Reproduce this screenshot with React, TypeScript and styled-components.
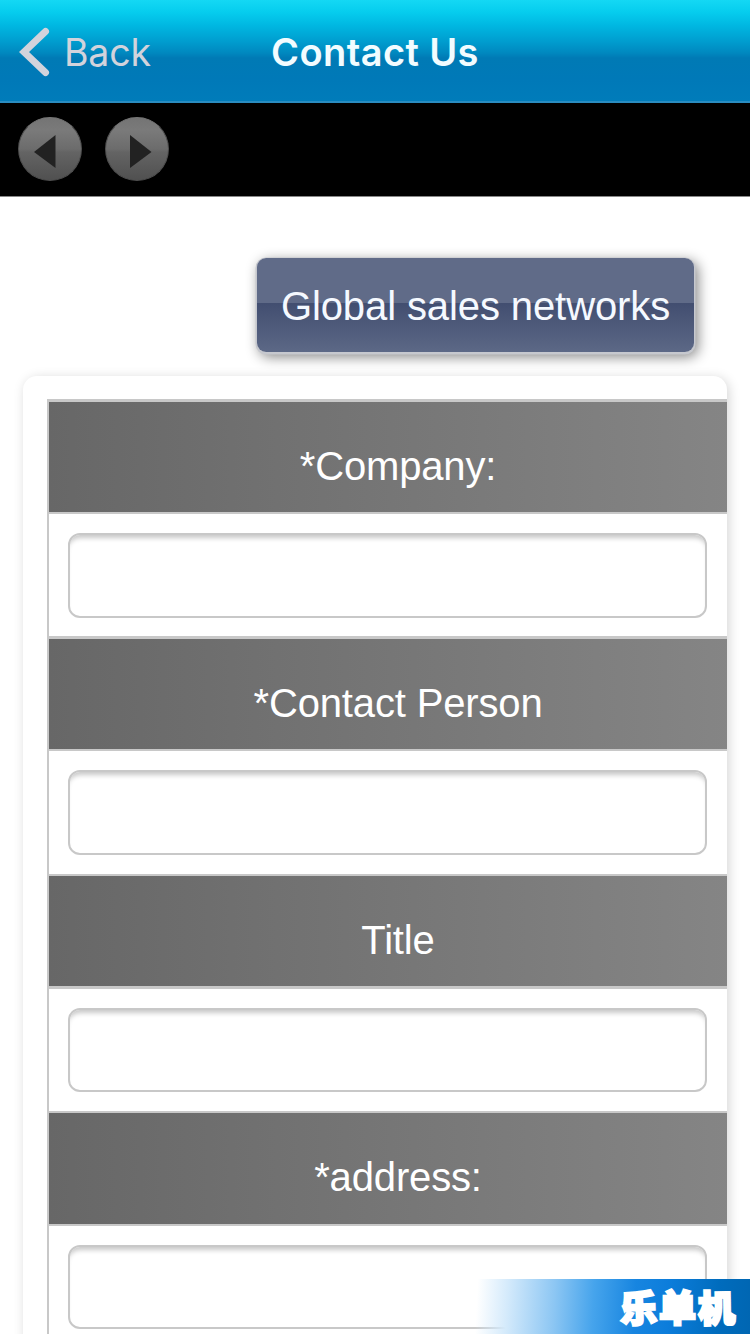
import React from "react";
import styled, { createGlobalStyle } from "styled-components";

const GlobalStyle = createGlobalStyle`
  * { box-sizing: border-box; }
  html, body { margin: 0; padding: 0; background: #fff; }
  body { width: 750px; height: 1334px; overflow: hidden; font-family: "Liberation Sans", Arial, sans-serif; }
  button { border: 0; padding: 0; font: inherit; }
`;

const Screen = styled.div`
  position: relative;
  width: 750px;
  height: 1334px;
  overflow: hidden;
  display: flex;
  flex-direction: column;
`;

const NavBar = styled.header`
  flex: none;
  height: 103px;
  display: grid;
  grid-template-columns: 200px 1fr 200px;
  align-items: center;
  border-bottom: 2px solid #2a8cc0;
  background: linear-gradient(#14d8f4 0, #06cdee 12px, #00b8e2 25px, #009cce 42px, #0088bf 53px, #007ab5 58px, #0079b8 80px, #007cba 101px);
  font-family: Inter, "Liberation Sans", sans-serif;
`;

const BackButton = styled.button`
  display: flex;
  align-items: center;
  gap: 14px;
  padding: 2px 0 0 19px;
  background: none;
  color: #d2d3dc;
  font-size: 37.5px;
  line-height: 42px;
  letter-spacing: -0.2px;
`;

const BackText = styled.span`
  padding-top: 2px;
`;

const Title = styled.h1`
  margin: 3px 0 0;
  text-align: center;
  color: #f2fcff;
  font-size: 38px;
  line-height: 42px;
  font-weight: 600;
  letter-spacing: 0.4px;
`;

const Toolbar = styled.nav`
  flex: none;
  height: 94px;
  display: flex;
  gap: 23px;
  padding: 14px 18px 0;
  background: #000;
  border-bottom: 1px solid #888;
`;

const RoundButton = styled.button`
  display: flex;
  width: 64px;
  height: 64px;
  border-radius: 50%;
  border: 1px solid #505050;
  border-top-color: #777;
  background: linear-gradient(#747474, #7a7a7a 20%, #6c6c6c 50%, #646464 55%, #505050);
`;

const Actions = styled.div`
  flex: none;
  display: flex;
  justify-content: flex-end;
  padding: 61px 56px 0 0;
`;

const SalesButton = styled.button`
  width: 437px;
  height: 94px;
  border-radius: 9px;
  background: linear-gradient(#606b88 0 45px, #424e70 45px, #5c6886 94px);
  box-shadow: 0 1px 0 1.5px #c6c8ce, 3px 4px 13px 1px rgba(0, 0, 0, 0.48);
  color: #f5f9ff;
  font-size: 40px;
  line-height: 96px;
  letter-spacing: -0.1px;
`;

const Card = styled.main`
  flex: none;
  position: relative;
  width: 704px;
  height: 1000px;
  margin: 24px 0 0 23px;
  padding: 23px 0 0 24px;
  border-radius: 14px 14px 0 0;
  background: #fff;
  box-shadow: 2px 2px 12px rgba(0, 0, 0, 0.17);
`;

const Clip = styled.div`
  overflow: hidden;
`;

const Form = styled.form`
  width: 700px;
  border-left: 2px solid #c8c8c8;
`;

interface RowSize {
  $top: number;
  $fill: number;
  $bottom: number;
}

const Label = styled.label<RowSize>`
  display: block;
  height: ${(p) => p.$top + p.$fill + p.$bottom}px;
  border: solid #c8c8c8;
  border-width: ${(p) => p.$top}px 0 ${(p) => p.$bottom}px;
  background: linear-gradient(90deg, #676767, #858585 98%);
  color: #fff;
  font-size: 40px;
  line-height: 128px;
  letter-spacing: -0.15px;
  text-align: center;
`;

const Cell = styled.div<{ $height: number }>`
  height: ${(p) => p.$height}px;
  padding: 19px 0 0 19px;
`;

const Field = styled.input<{ $height: number }>`
  display: block;
  width: 639px;
  height: ${(p) => p.$height}px;
  border: 2px solid #c8c8c8;
  border-radius: 12px;
  outline: none;
  background: #fff;
  box-shadow: inset 0 6px 5px -3px rgba(0, 0, 0, 0.22);
`;

const Watermark = styled.div`
  position: absolute;
  right: 0;
  bottom: 0;
  display: flex;
  justify-content: flex-end;
  width: 275px;
  height: 55px;
  padding-right: 13px;
  background: linear-gradient(93deg, rgba(255,255,255,0) 1%, #d4eafb 12%, #8cc6f3 29%, #46a4ec 43%, #1785e0 58%, #0c7ddb 70%, #006cbd 88%, #0066b2);
  color: #fff;
  font-family: "Noto Sans CJK SC", sans-serif;
  font-size: 37px;
  font-weight: 900;
  line-height: 54px;
  letter-spacing: 2px;
  -webkit-text-stroke: 2.5px #fff;
  stroke-linejoin: round;
`;

const Glyph = styled.span<{ $tilt: number }>`
  transform: rotate(${(p) => p.$tilt}deg);
`;

const rows = [
  { label: "*Company:", top: 3, fill: 110, bottom: 2, cell: 122, field: 85 },
  { label: "*Contact Person", top: 3, fill: 110, bottom: 2, cell: 123, field: 85 },
  { label: "Title", top: 2, fill: 110, bottom: 3, cell: 122, field: 84 },
  { label: "*address:", top: 2, fill: 111, bottom: 2, cell: 122, field: 84 },
];

export default function App() {
  return (
    <>
      <GlobalStyle />
      <Screen>
        <NavBar>
          <BackButton>
            <svg width="31" height="50" viewBox="0 0 31 50">
              <path d="M26.5 4.5 L5 25 L26.5 45.5" fill="none" stroke="#d2d3dc" strokeWidth="7" strokeLinecap="round" strokeLinejoin="miter" />
            </svg>
            <BackText>Back</BackText>
          </BackButton>
          <Title>Contact Us</Title>
        </NavBar>
        <Toolbar>
          <RoundButton aria-label="Previous">
            <svg width="62" height="62" viewBox="0 0 62 62">
              <path d="M15 34 L36.5 17 V50 Z" fill="#222" />
            </svg>
          </RoundButton>
          <RoundButton aria-label="Next">
            <svg width="62" height="62" viewBox="0 0 62 62">
              <path d="M45.5 34 L24 17 V50 Z" fill="#222" />
            </svg>
          </RoundButton>
        </Toolbar>
        <Actions>
          <SalesButton>Global sales networks</SalesButton>
        </Actions>
        <Card>
          <Clip>
            <Form>
              {rows.map((row) => (
                <React.Fragment key={row.label}>
                  <Label $top={row.top} $fill={row.fill} $bottom={row.bottom}>
                    {row.label}
                  </Label>
                  <Cell $height={row.cell}>
                    <Field $height={row.field} aria-label={row.label} />
                  </Cell>
                </React.Fragment>
              ))}
            </Form>
          </Clip>
        </Card>
        <Watermark>
          <Glyph $tilt={-2}>乐</Glyph>
          <Glyph $tilt={0}>单</Glyph>
          <Glyph $tilt={-1}>机</Glyph>
        </Watermark>
      </Screen>
    </>
  );
}
